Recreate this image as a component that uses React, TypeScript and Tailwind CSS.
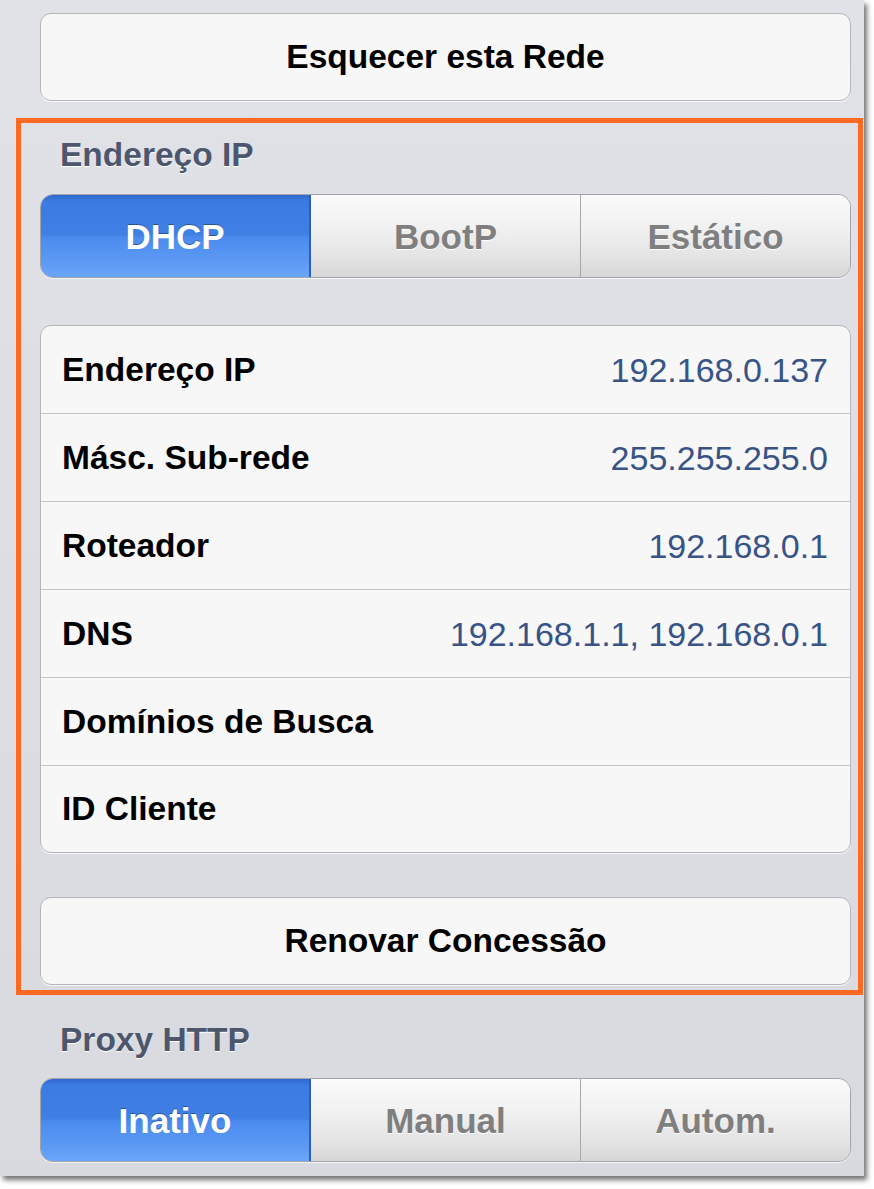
import React from "react";

const rows: { label: string; value?: string }[] = [
  { label: "Endereço IP", value: "192.168.0.137" },
  { label: "Másc. Sub-rede", value: "255.255.255.0" },
  { label: "Roteador", value: "192.168.0.1" },
  { label: "DNS", value: "192.168.1.1, 192.168.0.1" },
  { label: "Domínios de Busca" },
  { label: "ID Cliente" },
];

function Segmented({ items }: { items: string[] }) {
  return (
    <div className="flex h-[84px] w-full overflow-hidden rounded-[13px] border border-[#a2a4a8] shadow-[0_1px_0_rgba(255,255,255,0.7)]">
      {items.map((it, i) =>
        i === 0 ? (
          <div
            key={it}
            className="flex w-[270px] items-center justify-center border-r-[2px] border-[#2c5eb3] bg-[linear-gradient(to_bottom,#2f69cf_0%,#3c7be1_8%,#4080e4_48%,#4b8bee_52%,#5b99f3_80%,#6aa6f8_100%)] text-[35px] font-bold leading-none text-white [text-shadow:0_-1px_0_rgba(0,0,0,0.35)]"
          >
            {it}
          </div>
        ) : (
          <div
            key={it}
            className={`flex flex-1 items-center justify-center bg-[linear-gradient(to_bottom,#fafafa_0%,#f1f1f1_40%,#e4e4e4_75%,#d6d6d6_100%)] text-[35px] font-bold leading-none text-[#7f7f7f] [text-shadow:0_1px_0_#ffffff] ${
              i === 2 ? "border-l border-[#a8a8a8]" : ""
            }`}
          >
            {it}
          </div>
        )
      )}
    </div>
  );
}

function PlainButton({ label }: { label: string }) {
  return (
    <div className="flex h-[88px] w-full items-center justify-center rounded-[11px] border border-[#b3b5b9] bg-[#f7f7f7] text-[33.5px] font-bold leading-none text-black shadow-[0_1px_0_rgba(255,255,255,0.8)]">
      {label}
    </div>
  );
}

export default function App() {
  return (
    <div className="min-h-[1189px] w-[874px] bg-white font-['Liberation_Sans',Arial,Helvetica,sans-serif]">
      <div className="flex h-[1176px] w-[864px] flex-col bg-[linear-gradient(to_bottom,#e0e2e7,#d8dadf)] shadow-[3px_4px_5px_rgba(0,0,0,0.55)]">
        <div className="mt-[13px] pl-[40px] pr-[13px]">
          <PlainButton label="Esquecer esta Rede" />
        </div>

        <div className="ml-[16px] mt-[17px] w-[847px] border-[5px] border-[#fe6a22] pb-[5px] pl-[19px] pr-[7px]">
          <div className="h-[71px] pl-[20px] pt-[15px] text-[33.5px] font-bold leading-none text-[#4c566c] [text-shadow:0_1px_0_#ffffff]">
            Endereço IP
          </div>
          <Segmented items={["DHCP", "BootP", "Estático"]} />

          <div className="mt-[47px] overflow-hidden rounded-[11px] border border-[#b3b5b9] bg-[#f7f7f7] shadow-[0_1px_0_rgba(255,255,255,0.8)]">
            {rows.map((r, i) => (
              <div
                key={r.label}
                className={`flex items-center justify-between pl-[21px] pr-[22px] ${
                  i < rows.length - 1 ? "h-[88px] border-b border-[#c8c8cc]" : "h-[86px]"
                }`}
              >
                <span className="text-[33.5px] font-bold leading-none text-black">{r.label}</span>
                {r.value && (
                  <span className="text-[34px] leading-none text-[#385487]">{r.value}</span>
                )}
              </div>
            ))}
          </div>

          <div className="mt-[44px]">
            <PlainButton label="Renovar Concessão" />
          </div>
        </div>

        <div className="h-[83px] pl-[60px] pt-[28px] text-[33.5px] font-bold leading-none text-[#4c566c] [text-shadow:0_1px_0_#ffffff]">
          Proxy HTTP
        </div>
        <div className="pl-[40px] pr-[13px]">
          <Segmented items={["Inativo", "Manual", "Autom."]} />
        </div>
      </div>
    </div>
  );
}
